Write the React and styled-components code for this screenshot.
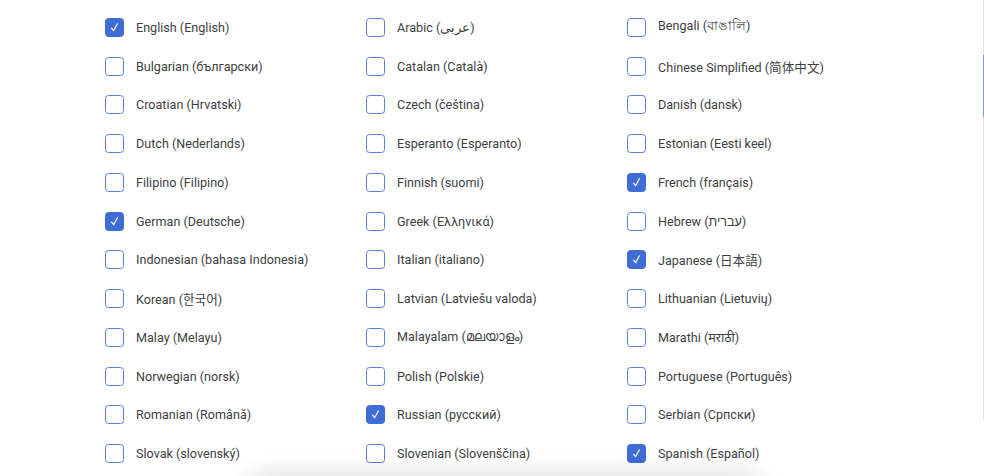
import styled, { createGlobalStyle } from "styled-components";

const GlobalStyle = createGlobalStyle`
  html, body {
    margin: 0;
    background: #fff;
    overflow: hidden;
  }
  body {
    font-family: Roboto, "Noto Sans", "Noto Sans CJK SC", "Noto Sans CJK JP", "Noto Sans CJK KR", sans-serif;
  }
`;

const Page = styled.div`
  position: relative;
  width: 984px;
  height: 476px;
  overflow: hidden;
`;

const Grid = styled.div`
  display: grid;
  grid-template-columns: repeat(3, 261px);
  grid-auto-rows: 38.75px;
  padding: 8px 0 0 105px;
`;

const Item = styled.label`
  display: flex;
  align-items: center;
  gap: 12px;
  font-size: 12.6px;
  color: #3d3f42;
  white-space: nowrap;
`;

const Box = styled.span`
  box-sizing: border-box;
  flex: none;
  width: 19px;
  height: 19px;
  border-radius: 3.5px;
  border: 1.5px solid #5a80da;
  background: ${(p) => (p.checked ? "#3f6dd6" : "#fff")};
  border-color: ${(p) => (p.checked ? "#3f6dd6" : "#5a80da")};
  display: flex;
  align-items: center;
  justify-content: center;
`;

const ScrollTrack = styled.div`
  position: absolute;
  right: 0;
  top: 0;
  width: 1px;
  height: 420px;
  background: #e2e2e2;
`;

const ScrollThumb = styled.div`
  position: absolute;
  right: 0;
  top: 55px;
  width: 1.5px;
  height: 62px;
  background: #7f9bcf;
`;

const FloatShadow = styled.div`
  position: absolute;
  left: 250px;
  width: 510px;
  top: 478px;
  height: 40px;
  border-radius: 20px;
  background: #fff;
  box-shadow: 0 0 22px 6px rgba(0, 0, 0, 0.12);
`;

const languages = [
  ["English (English)", true],
  ["Arabic (عربى)", false],
  ["Bengali (বাঙালি)", false],
  ["Bulgarian (български)", false],
  ["Catalan (Català)", false],
  ["Chinese Simplified (简体中文)", false],
  ["Croatian (Hrvatski)", false],
  ["Czech (čeština)", false],
  ["Danish (dansk)", false],
  ["Dutch (Nederlands)", false],
  ["Esperanto (Esperanto)", false],
  ["Estonian (Eesti keel)", false],
  ["Filipino (Filipino)", false],
  ["Finnish (suomi)", false],
  ["French (français)", true],
  ["German (Deutsche)", true],
  ["Greek (Ελληνικά)", false],
  ["Hebrew (עברית)", false],
  ["Indonesian (bahasa Indonesia)", false],
  ["Italian (italiano)", false],
  ["Japanese (日本語)", true],
  ["Korean (한국어)", false],
  ["Latvian (Latviešu valoda)", false],
  ["Lithuanian (Lietuvių)", false],
  ["Malay (Melayu)", false],
  ["Malayalam (മലയാളം)", false],
  ["Marathi (मराठी)", false],
  ["Norwegian (norsk)", false],
  ["Polish (Polskie)", false],
  ["Portuguese (Português)", false],
  ["Romanian (Română)", false],
  ["Russian (русский)", true],
  ["Serbian (Српски)", false],
  ["Slovak (slovenský)", false],
  ["Slovenian (Slovenščina)", false],
  ["Spanish (Español)", true],
];

const Check = () => (
  <svg width="11" height="11" viewBox="0 0 11 11">
    <polyline points="2.6,6.2 4.6,8.7 8.4,1.8" fill="none" stroke="#fff" strokeWidth="1.2" strokeLinecap="round" strokeLinejoin="round" />
  </svg>
);

export default function App() {
  return (
    <Page>
      <GlobalStyle />
      <Grid>
        {languages.map(([name, checked]) => (
          <Item key={name}>
            <Box checked={checked}>{checked && <Check />}</Box>
            {name}
          </Item>
        ))}
      </Grid>
      <ScrollTrack />
      <ScrollThumb />
      <FloatShadow />
    </Page>
  );
}
